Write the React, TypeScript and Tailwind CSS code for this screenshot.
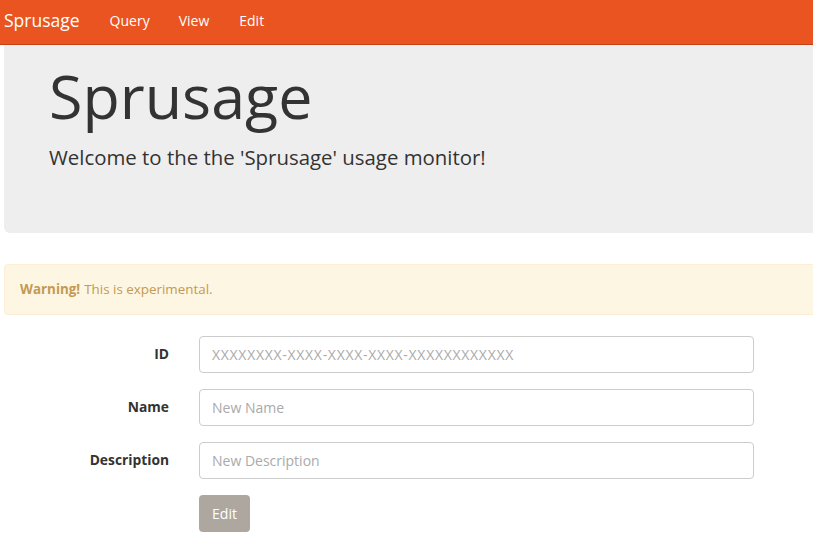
import React from "react"

const font = { fontFamily: '"Open Sans", "Noto Sans", sans-serif' }

function Field({
  label,
  placeholder,
  wide,
}: {
  label: string
  placeholder: string
  wide?: boolean
}) {
  return (
    <div className="flex h-[37px] items-center">
      <label className="w-[169px] text-right text-[13.8px] font-bold text-[#333]">
        {label}
      </label>
      <input
        className={
          "ml-[30px] h-[37px] w-[555px] rounded-[4px] border border-[#ccc] px-3 text-[14px] text-[#333] placeholder:text-[#aaa] focus:outline-none " +
          (wide ? "tracking-[0.7px]" : "")
        }
        placeholder={placeholder}
      />
    </div>
  )
}

export default function App() {
  return (
    <div className="h-[549px] w-[813px] overflow-hidden bg-white" style={font}>
      <nav className="flex h-[45px] w-full items-center border-b border-[#c34113] bg-[#e95420] pb-[4px] text-white">
        <a className="ml-[4px] text-[17.5px]">Sprusage</a>
        <a className="ml-[30px] text-[14px]">Query</a>
        <a className="ml-[29px] text-[14px]">View</a>
        <a className="ml-[30px] text-[14px]">Edit</a>
      </nav>
      <div className="ml-[4px] h-[188px] w-[840px] rounded-bl-[6px] bg-[#eeeeee] pl-[45px] pt-[14px] text-[#333]">
        <h1 className="text-[61px] leading-[1.2]">Sprusage</h1>
        <p className="mt-[10px] text-[20.4px]">Welcome to the the 'Sprusage' usage monitor!</p>
      </div>
      <div className="ml-[4px] mt-[31px] flex h-[51px] w-[840px] items-center rounded-[4px] border border-[#fbeed5] bg-[#fcf6e3] pl-[15px] text-[13.4px] text-[#c49a52]">
        <strong>Warning!</strong>
        <span className="ml-1">This is experimental.</span>
      </div>
      <form className="mt-[21px] flex flex-col gap-[16px]">
        <Field label="ID" placeholder="XXXXXXXX-XXXX-XXXX-XXXX-XXXXXXXXXXXX" wide />
        <Field label="Name" placeholder="New Name" />
        <Field label="Description" placeholder="New Description" />
        <div className="pl-[199px]">
          <button
            type="button"
            className="h-[37px] w-[51px] rounded-[4px] bg-[#aea79f] text-[14px] text-white"
          >
            Edit
          </button>
        </div>
      </form>
    </div>
  )
}
